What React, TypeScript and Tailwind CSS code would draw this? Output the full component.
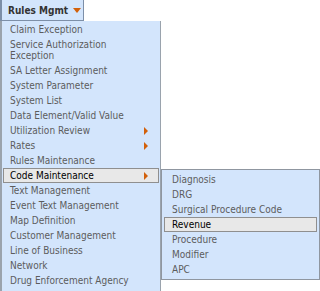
const mainItems: { label: string; arrow?: boolean; active?: boolean }[] = [
  { label: "Claim Exception" },
  { label: "Service Authorization Exception" },
  { label: "SA Letter Assignment" },
  { label: "System Parameter" },
  { label: "System List" },
  { label: "Data Element/Valid Value" },
  { label: "Utilization Review", arrow: true },
  { label: "Rates", arrow: true },
  { label: "Rules Maintenance" },
  { label: "Code Maintenance", arrow: true, active: true },
  { label: "Text Management" },
  { label: "Event Text Management" },
  { label: "Map Definition" },
  { label: "Customer Management" },
  { label: "Line of Business" },
  { label: "Network" },
  { label: "Drug Enforcement Agency" },
];

const subItems = ["Diagnosis", "DRG", "Surgical Procedure Code", "Revenue", "Procedure", "Modifier", "APC"];

const Arrow = () => (
  <span className="w-0 h-0 border-y-[4px] border-y-transparent border-l-[4px] border-l-[#d2600a]" />
);

export default function App() {
  return (
    <div className="w-[320px] h-[291px] bg-white overflow-hidden text-[10px] font-['DejaVu_Sans_Condensed','DejaVu_Sans',sans-serif]">
      <div className="flex items-center gap-[5px] w-[84px] h-[21px] pl-[6px] whitespace-nowrap bg-[#d3e5fc] border-l-2 border-b border-r border-[#7d8fa8] font-bold text-[10px] text-[#333]">
        <span>Rules Mgmt</span>
        <span className="shrink-0 w-0 h-0 border-x-[4px] border-x-transparent border-t-[5px] border-t-[#d2600a]" />
      </div>
      <div className="flex items-start">
        <div className="w-[161px] h-[270px] bg-[#d3e5fc] border-l-2 border-r border-[#9aa3ad] pt-[1px] px-[1px]">
          {mainItems.map((item) => (
            <div
              key={item.label}
              className={`flex items-center justify-between pl-[6px] pr-[10px] py-[1px] leading-[11px] border ${
                item.active ? "bg-[#e8e8e8] border-[#8f8f8f] text-black" : "border-transparent text-[#5c5c5c]"
              }`}
            >
              <span className="w-[130px]">{item.label}</span>
              {item.arrow && <Arrow />}
            </div>
          ))}
        </div>
        <div className="mt-[148px] w-[159px] bg-[#d3e5fc] border border-[#8f96a0] py-[2px] px-[2px]">
          {subItems.map((s) => (
            <div
              key={s}
              className={`pl-[7px] py-[1px] leading-[11px] border ${
                s === "Revenue" ? "bg-[#e8e8e8] border-[#8f8f8f] text-black" : "border-transparent text-[#5c5c5c]"
              }`}
            >
              {s}
            </div>
          ))}
        </div>
      </div>
    </div>
  );
}
